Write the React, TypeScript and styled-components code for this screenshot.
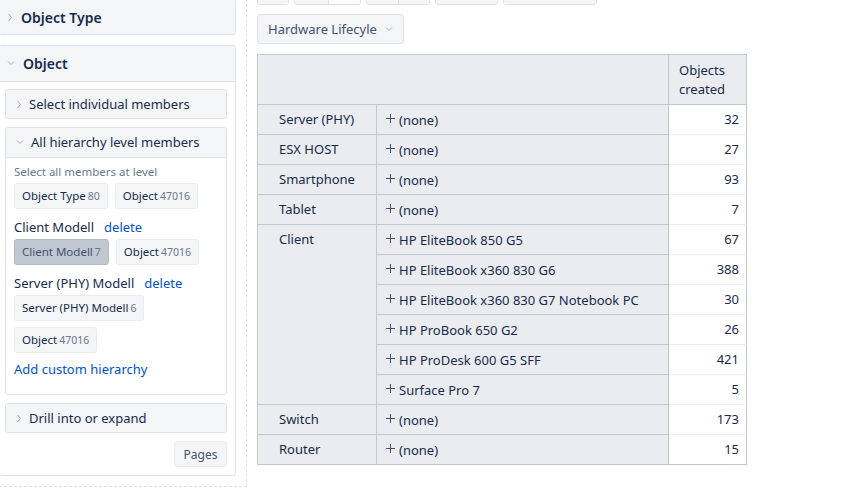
import React from "react";
import styled, { createGlobalStyle } from "styled-components";

const GlobalStyle = createGlobalStyle`
  body {
    margin: 0;
    background: #fff;
    color: #172b4d;
    font-family: "Noto Sans", "Open Sans", sans-serif;
    font-size: 13px;
  }
  * { box-sizing: border-box; }
`;

const Page = styled.div`
  display: flex;
  align-items: flex-start;
  margin-top: -1px;
`;

const Sidebar = styled.aside`
  width: 248px;
  margin-left: -1px;
  padding: 0 10px 10px 0;
  border-right: 1px dashed #dfe1e6;
  border-bottom: 1px dashed #dfe1e6;
  display: flex;
  flex-direction: column;
  gap: 10px;
`;

const Panel = styled.section`
  border: 1px solid #dfe1e6;
  border-radius: 3px;
  background: #fff;
  overflow: hidden;
`;

const PanelHeader = styled.div<{ $open?: boolean; $sub?: boolean }>`
  display: flex;
  align-items: center;
  gap: ${(p) => (p.$sub ? "7px" : "8px")};
  height: ${(p) => (p.$sub ? 28 : 34) + (p.$open ? 2 : 0)}px;
  padding: 0 0 ${(p) => (p.$open ? 1 : 0)}px ${(p) => (p.$sub ? "10px" : "7px")};
  background: #f4f5f7;
  font-size: ${(p) => (p.$sub ? "13px" : "14px")};
  font-weight: ${(p) => (p.$sub ? 400 : 600)};
  color: #172b4d;
  border-bottom: ${(p) => (p.$open ? "1px solid #dfe1e6" : "none")};
`;

const PanelBody = styled.div`
  padding: 7px 8px 8px 5px;
  display: flex;
  flex-direction: column;
  gap: 8px;
`;

const SubBody = styled.div`
  padding: 6px 8px 16px 8px;
  display: flex;
  flex-direction: column;
`;

const Caption = styled.div`
  font-size: 11.5px;
  line-height: 16px;
  color: #6b778c;
  margin-bottom: 3px;
`;

const ChipRow = styled.div`
  display: flex;
  flex-wrap: wrap;
  column-gap: 7px;
  row-gap: 6px;
`;

const Chip = styled.button<{ $active?: boolean }>`
  display: inline-flex;
  align-items: baseline;
  gap: 2px;
  height: 26px;
  padding: 3px 7px 0;
  border: 1px solid ${(p) => (p.$active ? "#b3bac5" : "#ebecf0")};
  border-radius: 3px;
  background: ${(p) => (p.$active ? "#c1c7d0" : "#f4f5f7")};
  color: ${(p) => (p.$active ? "#42526e" : "#172b4d")};
  font-family: inherit;
  font-size: 11.5px;
  line-height: 18px;
`;

const Count = styled.span`
  font-size: 10.5px;
  color: #6b778c;
`;

const LevelTitle = styled.div`
  display: flex;
  gap: 10px;
  margin-top: 9px;
  margin-bottom: 3px;
  font-size: 13px;
  line-height: 18px;
`;

const Link = styled.a`
  color: #0052cc;
  text-decoration: none;
  cursor: pointer;
`;

const AddLink = styled(Link)`
  margin-top: 7px;
  font-size: 13px;
  line-height: 18px;
`;

const Footer = styled.div`
  display: flex;
  justify-content: flex-end;
`;

const PlainButton = styled.button`
  height: 26px;
  width: 53px;
  padding: 0;
  border: 1px solid #ebecf0;
  border-radius: 3px;
  background: #f4f5f7;
  color: #42526e;
  font-family: inherit;
  font-size: 12px;
`;

const Main = styled.main`
  margin-left: 10px;
  display: flex;
  flex-direction: column;
  align-items: flex-start;
`;

const Toolbar = styled.div`
  display: flex;
  gap: 5px;
  margin-top: -22px;
`;

const ToolGroup = styled.div`
  display: flex;
  height: 28px;
  border: 1px solid #dfe1e6;
  border-radius: 3px;
  overflow: hidden;
`;

const ToolPart = styled.div<{ $w: number; $light?: boolean }>`
  width: ${(p) => p.$w}px;
  background: ${(p) => (p.$light ? "#fafbfc" : "#f4f5f7")};
  & + & { border-left: 1px solid #dfe1e6; }
`;

const Dropdown = styled.button`
  display: flex;
  align-items: center;
  gap: 8px;
  margin-top: 9px;
  height: 30px;
  padding: 0 10px 1px 10px;
  border: 1px solid #dfe1e6;
  border-radius: 3px;
  background: #f4f5f7;
  color: #42526e;
  font-family: inherit;
  font-size: 13px;
`;

const Table = styled.table`
  margin-top: 10px;
  width: 490px;
  table-layout: fixed;
  border-collapse: collapse;
  border: 1px solid #c1c7d0;
  font-size: 13px;
  color: #172b4d;

  td, th {
    height: 30px;
    padding: 0;
    font-weight: 400;
  }
`;

const HeadCell = styled.th<{ $right?: boolean }>`
  background: #ebecf0;
  text-align: left;
  line-height: 19px;
  padding: 0 10px !important;
  height: 50px !important;
  border-left: ${(p) => (p.$right ? "1px solid #c1c7d0" : "none")};
  border-bottom: 1px solid #c1c7d0;
`;

const LabelCell = styled.td`
  background: #ebecf0;
  vertical-align: top;
  padding: 5px 0 0 21px !important;
  line-height: 18px;
  border-top: 1px solid #c1c7d0;
  border-right: 1px solid #c1c7d0;
`;

const MemberCell = styled.td`
  background: #ebecf0;
  padding: 0 0 2px 9px !important;
  border-top: 1px solid #c1c7d0;
  border-right: 1px solid #c1c7d0;
`;

const Member = styled.span`
  display: inline-flex;
  align-items: center;
  gap: 4px;
`;

const ValueCell = styled.td`
  background: #fff;
  text-align: right;
  padding: 0 7px 2px 0 !important;
  border-top: 1px solid #ebecf0;
`;

const Chevron = ({ open }: { open?: boolean }) =>
  open ? (
    <svg width="8" height="8" viewBox="0 0 8 8">
      <path d="M1 2.5 L4 5.5 L7 2.5" fill="none" stroke="#a5adba" strokeWidth="1" />
    </svg>
  ) : (
    <svg width="6" height="9" viewBox="0 0 6 9">
      <path d="M1.5 1 L4.5 4.5 L1.5 8" fill="none" stroke="#a5adba" strokeWidth="1" />
    </svg>
  );

const Plus = () => (
  <svg width="9" height="9" viewBox="0 0 9 9" style={{ marginTop: -3 }}>
    <path d="M4.5 0 V9 M0 4.5 H9" stroke="#42526e" strokeWidth="1" />
  </svg>
);

type Row = { label: string; members: [string, number][] };

const rows: Row[] = [
  { label: "Server (PHY)", members: [["(none)", 32]] },
  { label: "ESX HOST", members: [["(none)", 27]] },
  { label: "Smartphone", members: [["(none)", 93]] },
  { label: "Tablet", members: [["(none)", 7]] },
  {
    label: "Client",
    members: [
      ["HP EliteBook 850 G5", 67],
      ["HP EliteBook x360 830 G6", 388],
      ["HP EliteBook x360 830 G7 Notebook PC", 30],
      ["HP ProBook 650 G2", 26],
      ["HP ProDesk 600 G5 SFF", 421],
      ["Surface Pro 7", 5],
    ],
  },
  { label: "Switch", members: [["(none)", 173]] },
  { label: "Router", members: [["(none)", 15]] },
];

export default function App() {
  return (
    <>
      <GlobalStyle />
      <Page>
        <Sidebar>
          <Panel>
            <PanelHeader>
              <Chevron />
              Object Type
            </PanelHeader>
          </Panel>
          <Panel>
            <PanelHeader $open>
              <Chevron open />
              Object
            </PanelHeader>
            <PanelBody>
              <Panel>
                <PanelHeader $sub>
                  <Chevron />
                  Select individual members
                </PanelHeader>
              </Panel>
              <Panel>
                <PanelHeader $sub $open>
                  <Chevron open />
                  All hierarchy level members
                </PanelHeader>
                <SubBody>
                  <Caption>Select all members at level</Caption>
                  <ChipRow>
                    <Chip>
                      Object Type<Count>80</Count>
                    </Chip>
                    <Chip>
                      Object<Count>47016</Count>
                    </Chip>
                  </ChipRow>
                  <LevelTitle>
                    Client Modell<Link>delete</Link>
                  </LevelTitle>
                  <ChipRow>
                    <Chip $active>
                      Client Modell<Count>7</Count>
                    </Chip>
                    <Chip>
                      Object<Count>47016</Count>
                    </Chip>
                  </ChipRow>
                  <LevelTitle>
                    Server (PHY) Modell<Link>delete</Link>
                  </LevelTitle>
                  <ChipRow>
                    <Chip>
                      Server (PHY) Modell<Count>6</Count>
                    </Chip>
                    <Chip>
                      Object<Count>47016</Count>
                    </Chip>
                  </ChipRow>
                  <AddLink>Add custom hierarchy</AddLink>
                </SubBody>
              </Panel>
              <Panel>
                <PanelHeader $sub>
                  <Chevron />
                  Drill into or expand
                </PanelHeader>
              </Panel>
              <Footer>
                <PlainButton>Pages</PlainButton>
              </Footer>
            </PanelBody>
          </Panel>
        </Sidebar>
        <Main>
          <Toolbar>
            <ToolGroup>
              <ToolPart $w={30} />
            </ToolGroup>
            <ToolGroup>
              <ToolPart $w={33} />
              <ToolPart $w={32} $light />
            </ToolGroup>
            <ToolGroup>
              <ToolPart $w={31} />
              <ToolPart $w={31} />
            </ToolGroup>
            <ToolGroup>
              <ToolPart $w={61} />
            </ToolGroup>
            <ToolGroup>
              <ToolPart $w={92} />
            </ToolGroup>
          </Toolbar>
          <Dropdown>
            Hardware Lifecyle
            <Chevron open />
          </Dropdown>
          <Table>
            <colgroup>
              <col style={{ width: 119 }} />
              <col style={{ width: 292 }} />
              <col style={{ width: 78 }} />
            </colgroup>
            <thead>
              <tr>
                <HeadCell colSpan={2} />
                <HeadCell $right>Objects created</HeadCell>
              </tr>
            </thead>
            <tbody>
              {rows.map((r) =>
                r.members.map(([name, value], i) => (
                  <tr key={r.label + name}>
                    {i === 0 && (
                      <LabelCell rowSpan={r.members.length}>{r.label}</LabelCell>
                    )}
                    <MemberCell>
                      <Member>
                        <Plus />
                        {name}
                      </Member>
                    </MemberCell>
                    <ValueCell>{value}</ValueCell>
                  </tr>
                ))
              )}
            </tbody>
          </Table>
        </Main>
      </Page>
    </>
  );
}
